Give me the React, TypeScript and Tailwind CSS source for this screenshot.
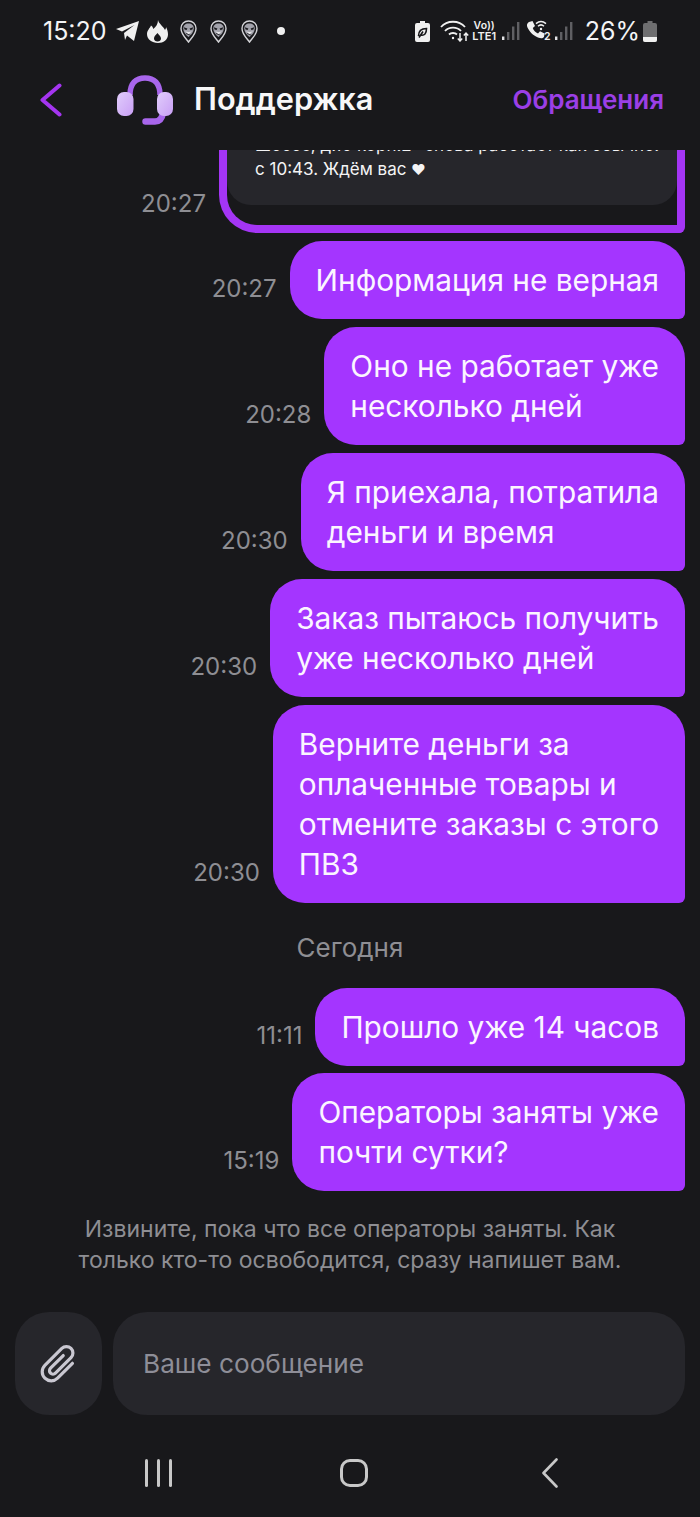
import { ReactNode } from 'react';

const PinMask = () => (
  <svg width="17" height="23" viewBox="0 0 17 23" className="shrink-0">
    <path d="M8.5 22 C6.5 19 1 14.5 1 8.5 C1 4 4.4 1 8.5 1 S16 4 16 8.5 C16 14.5 10.5 19 8.5 22 Z" fill="none" stroke="#d4d4d8" strokeWidth="1.4" />
    <path d="M8.5 3.4 C11.8 3.4 13.8 5.4 13.8 8.4 C13.8 11.2 11.6 14.6 8.5 17 C5.4 14.6 3.2 11.2 3.2 8.4 C3.2 5.4 5.2 3.4 8.5 3.4 Z" fill="#a1a1aa" />
    <path d="M3.8 7.2 L7.4 8.4 L6.6 10 L4.6 9.5 Z M13.2 7.2 L9.6 8.4 L10.4 10 L12.4 9.5 Z" fill="#18181b" />
    <path d="M5 11 C7 12.4 10 12.4 12 11 L8.5 14.6 Z" fill="#e4e4e7" />
    <path d="M6 13.5 L11 15.5" stroke="#18181b" strokeWidth="0.8" />
  </svg>
);

const Signal = () => (
  <svg width="18" height="20" viewBox="0 0 18 20" className="shrink-0">
    <rect x="0" y="15.5" width="2.4" height="3.5" fill="#e4e4e7" />
    <rect x="5" y="11" width="2.4" height="8" fill="#5f5f63" />
    <rect x="10" y="5.5" width="2.4" height="13.5" fill="#5f5f63" />
    <rect x="15" y="1" width="2.4" height="18" fill="#5f5f63" />
  </svg>
);

const Bubble = ({ time, children, className = '' }: { time: string; children: ReactNode; className?: string }) => (
  <div className={`flex shrink-0 items-end gap-[13px] ${className}`}>
    <span className="mb-[18px] text-[24px] leading-none text-[#8e8e93]">{time}</span>
    <div className="whitespace-nowrap rounded-[32px] rounded-br-[6px] bg-[#a435ff] px-[26px] py-[19px] text-[29.8px] leading-[40px] text-[#fbf5ff]">
      {children}
    </div>
  </div>
);

const StatusBar = () => (
  <div className="flex h-[62px] shrink-0 items-center justify-between pl-[43px] pr-[43px] text-[#f4f4f5]">
    <div className="flex items-center">
      <span className="w-[62px] text-[25px] leading-none">15:20</span>
      <svg width="23" height="20" viewBox="0 0 23 20" className="ml-[11px]">
        <path d="M23 0 L18 20 L11 14.5 L9 19 L8 12 L18.5 4 L6 10.5 L0 8 Z" fill="#f0f0f0" />
      </svg>
      <svg width="21" height="23" viewBox="0 0 21 23" className="ml-[8px]">
        <path d="M11 0 C12 4 16 6 18 10 C19 8.6 19 8 19 7 C20.5 10 21 12 21 14.5 C21 19.5 16.5 23 11 23 C5 23 0 19.5 0 14 C0 10.5 3 8 4 5.5 C5.5 6.5 6 7.6 6.2 9 C9 7 11 4 11 0 Z M10.5 13 C8.5 15 7 16.5 7 18.5 C7 20.5 8.6 21.5 10.5 21.5 C12.5 21.5 14 20.5 14 18.5 C14 16.5 12 15 10.5 13 Z" fill="#f0f0f0" fillRule="evenodd" />
      </svg>
      <div className="ml-[12px]"><PinMask /></div>
      <div className="ml-[13px]"><PinMask /></div>
      <div className="ml-[14px]"><PinMask /></div>
      <span className="ml-[19px] h-[8px] w-[8px] rounded-full bg-[#f0f0f0]" />
    </div>
    <div className="flex items-center">
      <svg width="15" height="21" viewBox="0 0 15 21">
        <path d="M5 0 H10 V2 H13 A2 2 0 0 1 15 4 V19 A2 2 0 0 1 13 21 H2 A2 2 0 0 1 0 19 V4 A2 2 0 0 1 2 2 H5 Z" fill="#f0f0f0" />
        <path d="M3.5 15 C3.5 9.5 7 7.5 11.5 7.5 C11.5 12.5 9.5 15 5.5 14 M4 16.5 L8 10.5" fill="none" stroke="#18181b" strokeWidth="1.6" />
      </svg>
      <svg width="29" height="22" viewBox="0 0 29 22" fill="none" stroke="#f0f0f0" strokeWidth="1.8" className="ml-[10px]">
        <path d="M1 7 C7 0 19 0 25 7" />
        <path d="M5 11 C9 6.5 17 6.5 21 11" />
        <path d="M9 14.5 C11 12.5 15 12.5 17 14.5" />
        <circle cx="13" cy="18" r="1.2" fill="#f0f0f0" stroke="none" />
        <path d="M20 13 V21 M17.8 18.6 L20 21 L22.2 18.6" strokeWidth="1.5" />
        <path d="M26 21 V13 M23.8 15.4 L26 13 L28.2 15.4" strokeWidth="1.5" />
      </svg>
      <div className="ml-[3px] flex w-[25px] flex-col items-center text-[10.5px] font-semibold leading-[10px] text-[#f0f0f0]">
        <span>Vo))</span>
        <span className="text-[11px]">LTE1</span>
      </div>
      <div className="ml-[5px]"><Signal /></div>
      <svg width="25" height="22" viewBox="0 0 25 22" className="ml-[6px]">
        <path d="M3 2 L6.5 1 L9 6 L6.8 8 C7.5 10.5 9.5 12.5 12 13.4 L14 11.2 L18.6 13.6 L18 17 C16.5 19 13.5 18.6 10 16.6 C5.6 14.2 2 9.6 1 6 C0.8 4.4 1.5 3 3 2 Z" fill="#f0f0f0" />
        <path d="M10 3.6 C13 1 17 1 20 3.6 M12 6.2 C13.8 4.6 16.2 4.6 18 6.2" fill="none" stroke="#f0f0f0" strokeWidth="1.5" />
        <circle cx="15" cy="9" r="1.2" fill="#f0f0f0" />
        <text x="18" y="20" fontSize="10.5" fontWeight="600" fill="#f0f0f0" fontFamily="Inter, sans-serif">2</text>
      </svg>
      <div className="ml-[4px]"><Signal /></div>
      <span className="ml-[12px] text-[25px] leading-none">26%</span>
      <svg width="14" height="21" viewBox="0 0 14 21" className="ml-[3px]">
        <path d="M4.5 0 H9.5 V2 H12 A2 2 0 0 1 14 4 V19 A2 2 0 0 1 12 21 H2 A2 2 0 0 1 0 19 V4 A2 2 0 0 1 2 2 H4.5 Z" fill="#6e6e70" />
        <path d="M0 16 H14 V19 A2 2 0 0 1 12 21 H2 A2 2 0 0 1 0 19 Z" fill="#f0f0f0" />
      </svg>
    </div>
  </div>
);

const Header = () => (
  <div className="flex h-[88px] shrink-0 items-center pb-[13px] pl-[40px] pr-[36px]">
    <svg width="22" height="34" viewBox="0 0 22 34" fill="none" stroke="#a435f0" strokeWidth="4" strokeLinecap="round" strokeLinejoin="round">
      <path d="M19.5 2.5 L2.5 17 L19.5 31.5" />
    </svg>
    <svg width="56" height="50" viewBox="0 0 56 50" className="ml-[55px]">
      <defs>
        <linearGradient id="cup" x1="0" y1="0" x2="1" y2="1">
          <stop offset="0" stopColor="#e0cdfb" />
          <stop offset="1" stopColor="#c99ff5" />
        </linearGradient>
      </defs>
      <path d="M13 20 C13 8 19 3 28 3 S43 8 43 20" fill="none" stroke="#a866ec" strokeWidth="5.5" />
      <path d="M46 38 C45 44 42 46.5 38 46.5 H28.5" fill="none" stroke="#a866ec" strokeWidth="6.5" strokeLinecap="round" />
      <rect x="0" y="17" width="16.5" height="24" rx="7" fill="url(#cup)" />
      <rect x="40" y="17" width="16" height="24" rx="7" fill="url(#cup)" />
    </svg>
    <span className="ml-[21px] text-[30.7px] font-semibold leading-none text-[#f7f7f8]">Поддержка</span>
    <span className="ml-auto text-[26px] font-semibold leading-none text-[#9b3fe6]">Обращения</span>
  </div>
);

export default function App() {
  return (
    <div className="flex h-[1517px] w-[700px] flex-col overflow-hidden bg-[#18181b] font-['Inter',sans-serif]">
      <StatusBar />
      <Header />

      <div className="flex h-[1041px] shrink-0 flex-col items-end justify-end gap-[8px] overflow-hidden px-[15px]">
        <div className="flex shrink-0 items-end gap-[13px]">
          <span className="mb-[17px] text-[24px] leading-none text-[#8e8e93]">20:27</span>
          <div className="w-[466px] rounded-bl-[38px] rounded-br-[6px] border-x-[8px] border-b-[8px] border-[#a435f5] pb-[20px]">
            <div className="whitespace-nowrap rounded-b-[24px] bg-[#26262b] pb-[23px] pl-[28px] pr-[20px] text-[17px] leading-[24px] text-[#f4f4f5]">
              Шоссе, д.10 корп.2" снова работает как обычно:
              <br />
              с 10:43. Ждём вас <span className="text-[14px]">♥</span>
            </div>
          </div>
        </div>
        <Bubble time="20:27">Информация не верная</Bubble>
        <Bubble time="20:28">Оно не работает уже<br />несколько дней</Bubble>
        <Bubble time="20:30">Я приехала, потратила<br />деньги и время</Bubble>
        <Bubble time="20:30">Заказ пытаюсь получить<br />уже несколько дней</Bubble>
        <Bubble time="20:30">Верните деньги за<br />оплаченные товары и<br />отмените заказы с этого<br />ПВЗ</Bubble>
        <div className="flex h-[69px] w-full shrink-0 items-center justify-center pt-[4px] text-[26px] leading-none text-[#8e8e93]">
          Сегодня
        </div>
        <Bubble time="11:11">Прошло уже 14 часов</Bubble>
        <Bubble time="15:19" className="-mt-[1px]">Операторы заняты уже<br />почти сутки?</Bubble>
      </div>

      <div className="mt-[23px] text-center text-[23px] leading-[31px] text-[#8e8e93]">
        Извините, пока что все операторы заняты. Как
        <br />
        только кто-то освободится, сразу напишет вам.
      </div>

      <div className="mt-[36px] flex h-[103px] shrink-0 gap-[11px] px-[15px]">
        <div className="flex w-[87px] items-center justify-center rounded-[34px] bg-[#26262b]">
          <svg width="44" height="44" viewBox="0 0 44 44" fill="none" stroke="#c9c7d1" strokeWidth="3.2" strokeLinecap="round">
            <g transform="translate(10 0) rotate(45 12 22)">
              <path d="M21 12 V33 a9 9 0 0 1 -18 0 V9 a6.5 6.5 0 0 1 13 0 V31 a3.5 3.5 0 0 1 -7 0 V13" />
            </g>
          </svg>
        </div>
        <div className="flex flex-1 items-center rounded-[34px] bg-[#26262b] pl-[30px] text-[26.2px] text-[#8e8e98]">
          Ваше сообщение
        </div>
      </div>

      <div className="flex flex-1 items-center pl-[145px] pt-[14px]">
        <div className="flex w-[27px] justify-between">
          <span className="h-[28px] w-[3px] rounded-sm bg-[#c8c8c8]" />
          <span className="h-[28px] w-[3px] rounded-sm bg-[#c8c8c8]" />
          <span className="h-[28px] w-[3px] rounded-sm bg-[#c8c8c8]" />
        </div>
        <span className="ml-[168px] h-[28px] w-[28px] rounded-[10px] border-[3px] border-[#c8c8c8]" />
        <svg width="16" height="30" viewBox="0 0 16 30" fill="none" stroke="#c8c8c8" strokeWidth="2.6" strokeLinecap="round" strokeLinejoin="round" className="ml-[174px]">
          <path d="M14.5 1.5 L1.5 15 L14.5 28.5" />
        </svg>
      </div>
    </div>
  );
}
